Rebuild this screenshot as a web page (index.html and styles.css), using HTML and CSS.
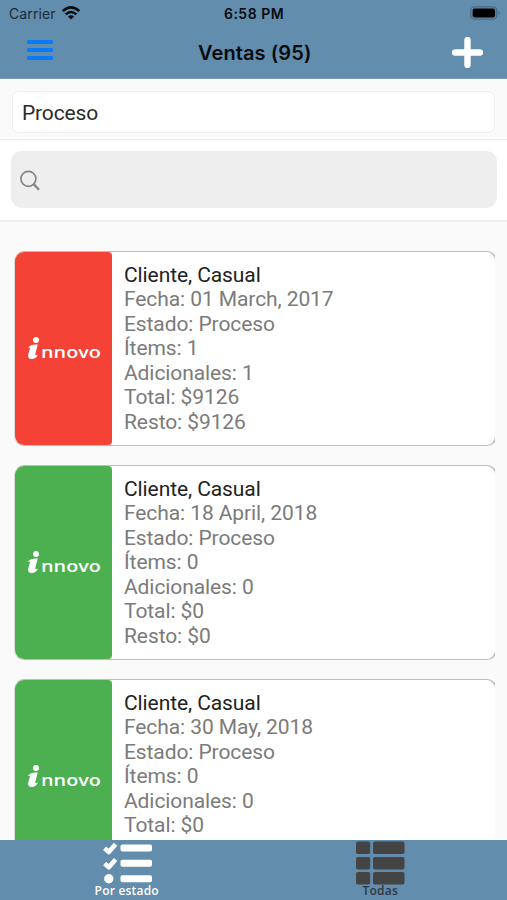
FILE: index.html
```html
<!DOCTYPE html>
<html lang="es">
<head>
<meta charset="utf-8">
<title>Ventas</title>
<link rel="stylesheet" href="styles.css">
</head>
<body>
<div class="app">
  <header class="header">
    <div class="status">
      <div class="carrier"><span class="carrier-name">Carrier</span>
        <svg class="wifi" width="18" height="14" viewBox="0 0 18 14"><g fill="none" stroke="#080c10" stroke-width="2.6"><path d="M.8 5.1Q9-2.3 17.2 5.1"/><path d="M3.7 8.4Q9 3.6 14.3 8.4"/></g><path d="M5.9 10.6Q9 8 12.1 10.6L9 13.6Z" fill="#080c10"/></svg>
      </div>
      <span class="time">6:58 PM</span>
      <svg class="battery" width="31" height="14" viewBox="0 0 31 14"><rect x=".8" y=".8" width="26" height="12.4" rx="3.6" fill="none" stroke="#476c86" stroke-width="1.3"/><rect x="2.6" y="2.5" width="22.5" height="9" rx="2" fill="#000"/><path d="M28.5 4.8q2 2.2 0 4.4z" fill="#476c86"/></svg>
    </div>
    <div class="nav">
      <svg class="menu" width="26" height="20" viewBox="0 0 26 20"><path d="M0 2H26M0 10H26M0 18H26" stroke="#0b7bf5" stroke-width="3.8"/></svg>
      <h1 class="title">Ventas (95)</h1>
      <svg class="plus" width="31" height="31" viewBox="0 0 31 31"><path d="M15.5 3V28M3 15.5H28" stroke="#fff" stroke-width="6.4" stroke-linecap="round"/></svg>
    </div>
  </header>
  <div class="filter"><div class="select">Proceso</div></div>
  <div class="search"><div class="search-box">
    <svg width="20" height="21" viewBox="0 0 20 21" fill="none" stroke="#858585"><circle cx="8.4" cy="8.8" r="7.5" stroke-width="1.7"/><path d="M13.6 14L19 19.8" stroke-width="2.3"/></svg>
  </div></div>
  <main class="list">
    <div class="clip"><article class="card">
      <div class="thumb red"><div class="logo"><svg width="14" height="23" viewBox="0 0 14 23"><circle cx="9" cy="3" r="3" fill="#fff"/><path d="M.5 11Q4 7 10.7 7.6L8.3 17Q8 19.3 11 17.6Q9.3 22 4.5 22Q.4 21.8 1.2 17.4L3.2 10.4Q2 10.3 .5 11Z" fill="#fff"/></svg><span>nnovo</span></div></div>
      <div class="info"><h2>Cliente, Casual</h2><p>Fecha: 01 March, 2017</p><p>Estado: Proceso</p><p>Ítems: 1</p><p>Adicionales: 1</p><p>Total: $9126</p><p>Resto: $9126</p></div>
    </article></div>
    <div class="clip"><article class="card">
      <div class="thumb green"><div class="logo"><svg width="14" height="23" viewBox="0 0 14 23"><circle cx="9" cy="3" r="3" fill="#fff"/><path d="M.5 11Q4 7 10.7 7.6L8.3 17Q8 19.3 11 17.6Q9.3 22 4.5 22Q.4 21.8 1.2 17.4L3.2 10.4Q2 10.3 .5 11Z" fill="#fff"/></svg><span>nnovo</span></div></div>
      <div class="info"><h2>Cliente, Casual</h2><p>Fecha: 18 April, 2018</p><p>Estado: Proceso</p><p>Ítems: 0</p><p>Adicionales: 0</p><p>Total: $0</p><p>Resto: $0</p></div>
    </article></div>
    <div class="clip"><article class="card">
      <div class="thumb green"><div class="logo"><svg width="14" height="23" viewBox="0 0 14 23"><circle cx="9" cy="3" r="3" fill="#fff"/><path d="M.5 11Q4 7 10.7 7.6L8.3 17Q8 19.3 11 17.6Q9.3 22 4.5 22Q.4 21.8 1.2 17.4L3.2 10.4Q2 10.3 .5 11Z" fill="#fff"/></svg><span>nnovo</span></div></div>
      <div class="info"><h2>Cliente, Casual</h2><p>Fecha: 30 May, 2018</p><p>Estado: Proceso</p><p>Ítems: 0</p><p>Adicionales: 0</p><p>Total: $0</p></div>
    </article></div>
  </main>
  <nav class="tabs">
    <div class="tab active">
      <svg width="50" height="44" viewBox="0 0 50 44" fill="#fff"><rect x="18.5" y="4.5" width="31.5" height="7" rx="1.8"/><rect x="18.5" y="19.8" width="31.5" height="7" rx="1.8"/><rect x="18.5" y="35.3" width="31.5" height="7" rx="1.8"/><circle cx="6.8" cy="38.7" r="4.7"/><path d="M2.6 8.3L6.8 12L13.6 4.3M2.6 23.5L6.8 27.2L13.6 19.5" fill="none" stroke="#fff" stroke-width="4.6" stroke-linejoin="round"/></svg>
      <span>Por estado</span>
    </div>
    <div class="tab">
      <svg class="grid-icon" width="50" height="44" viewBox="0 0 50 44" fill="#444"><rect x="1" y="1.5" width="14.2" height="12.5" rx="1.8"/><rect x="18" y="1.5" width="31.5" height="12.5" rx="1.8"/><rect x="1" y="17" width="14.2" height="12.5" rx="1.8"/><rect x="18" y="17" width="31.5" height="12.5" rx="1.8"/><rect x="1" y="32" width="14.2" height="12.5" rx="1.8"/><rect x="18" y="32" width="31.5" height="12.5" rx="1.8"/></svg>
      <span>Todas</span>
    </div>
  </nav>
</div>
</body>
</html>
```
FILE: styles.css
```css
* { box-sizing: border-box; }
body, h1, h2, p { margin: 0; }
body { font-family: Roboto, "Liberation Sans", sans-serif; background: #fafafa; overflow: hidden; }
.app { width: 507px; height: 900px; display: flex; flex-direction: column; overflow: hidden; }
.header { height: 79px; flex: none; background: #628dad; color: #070b0f; border-bottom: 1px solid #7c9fb9; font-family: Inter, sans-serif; }
.status { height: 27px; display: grid; grid-template-columns: 1fr auto 1fr; align-items: center; padding: 0 6px 0 9px; font-size: 14px; }
.carrier { display: flex; align-items: center; gap: 6px; }
.carrier-name { color: #1c2a35; letter-spacing: .1px; }
.wifi { margin-top: -2px; }
.time { font-weight: 600; letter-spacing: .5px; margin-right: 2px; }
.battery { justify-self: end; margin-top: -1px; }
.nav { height: 51px; display: grid; grid-template-columns: 1fr auto 1fr; align-items: center; padding: 0 24px 0 26.5px; }
.menu { margin-top: -5px; }
.title { font-size: 20px; font-weight: 600; line-height: 24px; letter-spacing: .1px; }
.plus { justify-self: end; margin-top: -1px; }
.filter { height: 61px; flex: none; padding: 12px 12px 0; border-bottom: 1px solid #ececec; }
.select { height: 42px; border: 1px solid #eee; border-radius: 7px; background: #fff; padding-left: 9px; font-size: 21px; line-height: 42px; color: #2b2b2b; letter-spacing: -.15px; }
.search { height: 82px; flex: none; padding: 11px 10px 0 11px; background: #fff; border-bottom: 2px solid #eee; }
.search-box { height: 57px; border-radius: 11px; background: #eee; padding: 19px 0 0 9px; }
.list { flex: 1; min-height: 0; overflow: hidden; padding: 29px 12px 0 14px; }
.clip { height: 195px; margin-bottom: 19px; overflow: hidden; }
.card { width: 483px; height: 195px; border: 1px solid #bdbdbd; border-left-color: #ddd; border-right-width: 2px; border-radius: 10px; background: #fff; overflow: hidden; display: flex; }
.thumb { width: 97px; flex: none; border-radius: 0 4px 4px 0; display: flex; align-items: center; justify-content: center; }
.red { background: #f44336; }
.green { background: #4caf50; }
.logo { display: flex; align-items: flex-end; color: #fff; }
.logo span { font: 600 16.5px/17px "Open Sans", sans-serif; transform: scaleX(1.2); transform-origin: left; width: 60px; }
.info { padding: 11px 0 0 12px; font-size: 21px; line-height: 24.45px; color: #7b7b7b; letter-spacing: -.09px; white-space: nowrap; }
.info h2 { font: inherit; color: #222; }
.tabs { height: 60px; flex: none; display: flex; background: #628dad; }
.tab { flex: 1; display: flex; flex-direction: column; align-items: center; font: 600 12px/13px "Open Sans", sans-serif; letter-spacing: .2px; color: #2e3740; }
.tab svg { display: block; overflow: visible; }
.active { color: #fff; }
```
